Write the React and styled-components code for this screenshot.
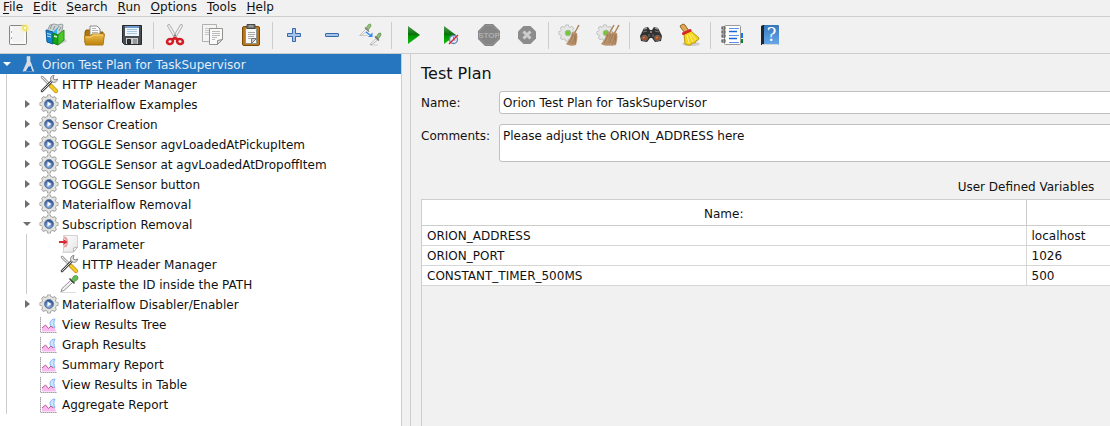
import React from "react";
import styled, { createGlobalStyle } from "styled-components";

const Global = createGlobalStyle`
  * { box-sizing: border-box; }
  body {
    margin: 0;
    background: #f1f1f1;
    color: #111;
    font: 12px/20px "DejaVu Sans", Verdana, sans-serif;
    overflow: hidden;
  }
  button, input, textarea { font: inherit; color: inherit; }
`;

const line = "#cdcdcd";

const Page = styled.div`
  display: flex;
  flex-direction: column;
  height: 100vh;
`;

const MenuBar = styled.nav`
  display: flex;
  flex: none;
  gap: 10px;
  height: 17px;
  padding-left: 3px;
  border-bottom: 1px solid ${line};
`;

const MenuItem = styled.button`
  display: block;
  height: 14px;
  border: 0;
  padding: 0;
  background: none;
  line-height: 13px;
  white-space: nowrap;
`;

const Mnemonic = styled.u`
  text-underline-offset: 2px;
`;

const ToolBar = styled.div`
  display: flex;
  flex: none;
  height: 37px;
  align-items: center;
  border-bottom: 1px solid ${line};
`;

const ToolButton = styled.button`
  display: flex;
  flex: none;
  border: 0;
  padding: 0 8px 0 6px;
  background: none;
`;

const Separator = styled.span`
  flex: none;
  width: 1px;
  height: 27px;
  margin: 0 3px 0 1px;
  background: ${line};
`;

const Main = styled.main`
  display: flex;
  flex: 1;
  min-height: 0;
`;

const TreePane = styled.aside`
  flex: 0 0 402px;
  overflow: hidden;
  background: #fff;
  border-right: 1px solid ${line};
`;

const Branch = styled.ul`
  list-style: none;
  margin: 0 0 0 ${(p) => (p.$root ? 0 : 6)}px;
  padding: 0 0 0 ${(p) => (p.$root ? 0 : 13)}px;
  border-left: ${(p) => (p.$root ? "0" : `1px solid ${line}`)};
`;

const Row = styled.div`
  display: flex;
  align-items: flex-start;
  height: 20px;
  line-height: 22px;
  white-space: nowrap;
  background: ${(p) => (p.$selected ? "#2675bf" : "transparent")};
  color: ${(p) => (p.$selected ? "#e4eef8" : "#111")};
`;

const Toggle = styled.button`
  display: flex;
  align-items: center;
  justify-content: center;
  width: 14px;
  height: 20px;
  margin-right: 5px;
  padding: 0;
  border: 0;
  background: none;
  color: ${(p) => (p.$selected ? "#fff" : "#6e6e6e")};
`;

const ToggleSpace = styled.span`
  width: 14px;
  margin-right: 5px;
`;

const RowIcon = styled.span`
  display: flex;
  width: 20px;
  margin-right: 3px;
`;

const EditorPane = styled.section`
  flex: 1;
  min-width: 0;
  overflow: hidden;
  margin-left: 8px;
  border-left: 1px solid ${line};
`;

const Editor = styled.div`
  display: flex;
  flex-direction: column;
  min-width: 1220px;
  height: 100%;
  padding: 8px 0 0 10px;
`;

const Title = styled.h1`
  margin: 0 0 6px;
  font-size: 16px;
  line-height: 23px;
  font-weight: 400;
`;

const Field = styled.div`
  display: flex;
  margin-bottom: ${(p) => p.$gap}px;
`;

const FieldLabel = styled.label`
  flex: 0 0 78px;
  line-height: 24px;
`;

const fieldBox = `
  flex: 1;
  min-width: 0;
  border: 1px solid #c0c0c0;
  border-radius: 3px;
  background: #fff;
  outline: 0;
`;

const TextInput = styled.input`
  ${fieldBox}
  height: 23px;
  padding: 0 3px;
`;

const TextArea = styled.textarea`
  ${fieldBox}
  height: 38px;
  padding: 1px 3px;
  resize: none;
  overflow: hidden;
`;

const TableFrame = styled.div`
  flex: 1;
  border-left: 1px solid ${line};
`;

const Table = styled.table`
  width: 100%;
  table-layout: fixed;
  border-collapse: separate;
  border-spacing: 0;
  background: #fff;
`;

const Caption = styled.h2`
  margin: 0;
  height: 25px;
  font-size: 12px;
  font-weight: 400;
  line-height: 26px;
  text-align: center;
`;

const HeadCell = styled.th`
  height: 27px;
  padding: 2px 5px 0;
  font-weight: 400;
  border: solid ${line};
  border-width: 1px 1px 1px 0;
`;

const Cell = styled.td`
  height: 20px;
  padding: 2px 5px 0;
  line-height: 17px;
  border: solid #d6d6d6;
  border-width: 0 1px 1px 0;
`;

const Svg = ({ size = 24, box = 24, children }) => (
  <svg width={size} height={size} viewBox={`0 0 ${box} ${box}`} fill="none" aria-hidden="true">
    {children}
  </svg>
);

const GradientSheet = styled.svg`
  position: absolute;
`;

const Gradients = () => (
  <GradientSheet width="0" height="0" aria-hidden="true">
    <defs>
      <linearGradient id="play" x1="0" y1="0" x2="0" y2="1">
        <stop offset="0" stopColor="#4f9a50" /><stop offset=".48" stopColor="#087008" />
        <stop offset=".5" stopColor="#008e00" /><stop offset="1" stopColor="#10bd10" />
      </linearGradient>
      <linearGradient id="gold" x1="0" y1="0" x2="0" y2="1">
        <stop offset="0" stopColor="#edbd4e" /><stop offset="1" stopColor="#bd820c" />
      </linearGradient>
      <linearGradient id="book" x1="0" y1="0" x2="0" y2="1">
        <stop offset="0" stopColor="#3778bd" /><stop offset="1" stopColor="#68a8ed" />
      </linearGradient>
      <linearGradient id="sheet" x1="0" y1="0" x2="1" y2="1">
        <stop offset="0" stopColor="#fff" /><stop offset="1" stopColor="#e4e4e4" />
      </linearGradient>
      <radialGradient id="hub" cx=".45" cy=".7" r=".6">
        <stop offset="0" stopColor="#9fc3ee" /><stop offset="1" stopColor="#2b5191" />
      </radialGradient>
    </defs>
  </GradientSheet>
);

const NewIcon = () => (
  <Svg>
    <rect x="3.5" y="2.5" width="17" height="19" rx="1" fill="#f3f3f3" stroke="#858781" />
    <path d="M5.5 4v16M19 9v11H6" stroke="#fff" />
    <path d="M5.5 8v2M5.5 14v2" stroke="#aaa" />
    <circle cx="19" cy="5" r="4.5" fill="#fbf08a" opacity=".55" />
    <circle cx="19" cy="5" r="2" fill="#fffbd0" stroke="#f0e268" strokeWidth="1.5" />
  </Svg>
);

const TemplatesIcon = () => (
  <Svg>
    <path d="M18 14l5 4-8 4" fill="#aaa" opacity=".6" />
    <path d="M4 6l2-4 4-1 4 1 4-1 1 1-1 6-5 4H3z" fill="#cfd5d6" stroke="#97a0a1" />
    <path d="M6 6l2-4M9 7l2-4M12 8l3-5M15 8l2-4" stroke="#87908f" />
    <path d="M2 7l7 2v12l-6-2z" fill="#1683ce" stroke="#0c5b96" />
    <path d="M9 9l4-4v8l-4 7z" fill="#3bb5ee" />
    <path d="M3 10.500l4 1M3 13l4 1" stroke="#bfe5fa" />
    <path d="M9 10l5 2v10l-5-2z" fill="#18a51a" stroke="#087a12" />
    <path d="M14 12l6-5v10l-6 5z" fill="#4cc628" stroke="#22951a" />
    <path d="M10 13l3 1" stroke="#d5f7c5" strokeWidth="1.500" />
  </Svg>
);

const OpenIcon = () => (
  <Svg>
    <path d="M3 20V9l1-2h5l1 2h11v11z" fill="#a8740b" stroke="#8b610e" />
    <path d="M8 13V3h7l3 3v8z" fill="#fafafa" stroke="#8c8c8c" />
    <path d="M10 5.500h4M10 7.500h6M10 9.500h6" stroke="#b5b5b5" />
    <path d="M2.500 13h6l1.500-2h12.500l-1.500 11H3.500z" fill="url(#gold)" stroke="#b37a0c" />
    <path d="M3.500 14h6l1.500-2h10" stroke="#f8d578" />
  </Svg>
);

const SaveIcon = () => (
  <Svg>
    <path d="M2.500 2.500h19v19h-17l-2-2z" fill="#494c50" stroke="#26292d" />
    <path d="M5 3h14v10H5z" fill="#eef5fb" />
    <path d="M5 3h14v2H5z" fill="#6c9bce" />
    <path d="M7 6.500h10M7 8.500h10M7 10.500h10" stroke="#a8c4df" />
    <path d="M6 15h12v6H6z" fill="#c9ccce" />
    <path d="M7.500 16.500h3v4h-3z" fill="#33373b" stroke="#222" />
    <path d="M13 16h4v5h-4z" fill="#97999b" />
  </Svg>
);

const CutIcon = () => (
  <Svg>
    <path d="M5 1.500l1.500 0 7 12-2 1.500-7-12zM19 1.500h-1.500l-7 12 2 1.500 7-12z" fill="#eeeeec" stroke="#a0a29e" strokeWidth=".8" strokeLinejoin="round" />
    <circle cx="12" cy="12.500" r="1" fill="#777" />
    <ellipse cx="7" cy="18.500" rx="3" ry="2.500" transform="rotate(-20 7 18.500)" stroke="#d51b24" strokeWidth="2.600" />
    <ellipse cx="17" cy="18.500" rx="3" ry="2.500" transform="rotate(20 17 18.500)" stroke="#d51b24" strokeWidth="2.600" />
    <path d="M9 16.500l3-1.500 3 1.500" stroke="#d51b24" strokeWidth="2.600" />
  </Svg>
);

const CopyIcon = () => (
  <Svg>
    <path d="M1.500 1.500h14v17h-14z" fill="#f4f4f4" stroke="#b0b2ae" />
    <path d="M4 5.500h9M4 7.500h9M4 9.500h6M4 11.500h4" stroke="#c8c8c8" />
    <path d="M8.500 5.500h13v11l-5 5h-8z" fill="#fafafa" stroke="#92948f" />
    <path d="M11 8.500h8M11 10.500h8M11 12.500h8M11 14.500h5M11 16.500h3" stroke="#b9b9b9" />
    <path d="M21.500 16.500l-5 5v-4z" fill="#ddd" stroke="#8c8e89" />
  </Svg>
);

const PasteIcon = () => (
  <Svg>
    <rect x="3.500" y="3.500" width="17" height="19" rx="1.500" fill="#b77719" stroke="#7e4c07" />
    <path d="M6.500 5.500h11v15h-11z" fill="#f8f8f7" stroke="#94958f" />
    <path d="M8 1.500h8v4H8z" fill="#777a77" stroke="#464846" />
    <path d="M10 3h4" stroke="#bbb" />
    <path d="M9 9.500h7M9 11.500h7M9 13.500h6M9 15.500h3" stroke="#a8a8a8" />
    <path d="M17.500 15.500l-5 5v-5z" fill="#ccc" stroke="#777" />
  </Svg>
);

const PlusIcon = () => (
  <Svg>
    <path d="M10.500 5.500h3v5h5v3h-5v5h-3v-5h-5v-3h5z" fill="#a7c4e8" stroke="#3768aa" strokeLinejoin="round" />
  </Svg>
);

const MinusIcon = () => (
  <Svg><rect x="5.500" y="10.500" width="13" height="3" rx=".5" fill="#a7c4e8" stroke="#3768aa" /></Svg>
);

const ToggleIcon = () => (
  <Svg>
    <path d="M1 12.500h9M12 22h8" stroke="#d0d0d0" />
    <path d="M2 12l6-6 1.500 1.500L4 12z" fill="#fafafa" stroke="#b9b9b9" strokeWidth=".8" />
    <path d="M7 4.500l4 4" stroke="#77806f" strokeWidth="1.500" />
    <path d="M8.500 4.500l2-3 2-.5.500 2-2.500 3.500z" fill="#93bf7b" stroke="#6e9a58" strokeWidth=".8" />
    <path d="M12 21.500l6-6 1.500 1.500-5.500 4.500z" fill="#fafafa" stroke="#a5a5a5" strokeWidth=".8" />
    <path d="M17 13.500l4 4" stroke="#66705f" strokeWidth="1.500" />
    <path d="M18.500 13.500l2-3 2-.5.500 2-2.500 3.500z" fill="#93bf7b" stroke="#5c8647" strokeWidth=".8" />
    <path d="M8 9l4 3" stroke="#3388ef" strokeWidth="1.500" />
    <path d="M10 14h4.500V9.500z" fill="#3388ef" />
  </Svg>
);

const PlayIcon = () => (
  <Svg><path d="M7 3v18l12-9z" fill="url(#play)" /></Svg>
);

const PlayNoTimerIcon = () => (
  <Svg>
    <path d="M5 3v18l12-9z" fill="url(#play)" />
    <circle cx="14.500" cy="16.500" r="4" fill="#e9edf8" stroke="#5f84bd" strokeWidth="1.300" />
    <path d="M14.500 14v3h2" stroke="#88a" />
    <path d="M10 21l9-9" stroke="#d22b35" strokeWidth="1.500" />
  </Svg>
);

const StopText = styled.text`
  font: bold 8px "Liberation Sans", sans-serif;
  fill: #adadad;
`;

const StopIcon = () => (
  <Svg>
    <path d="M8 1h8l7 7v8l-7 7H8l-7-7V8z" fill="#858585" />
    <path d="M8.500 2.500h7l6 6v7l-6 6h-7l-6-6v-7z" stroke="#929292" />
    <StopText x="12" y="15" textAnchor="middle">STOP</StopText>
  </Svg>
);

const ShutdownIcon = () => (
  <Svg>
    <path d="M8.500 3h7l5.500 5.500v7L15.500 21h-7L3 15.500v-7z" fill="#8c8c8c" />
    <path d="M8.500 8.500l7 7M15.500 8.500l-7 7" stroke="#ccc" strokeWidth="3" />
  </Svg>
);

const Broom = ({ x }) => (
  <g transform={`translate(${x} 0)`}>
    <path d="M17 11l5-9" stroke="#a9835a" strokeWidth="1.500" />
    <path d="M15 9l5 1c1 4 0 8-1 12-3 1-7 1-10-1 3-3 5-7 6-12z" fill="#b8926b" />
    <path d="M16 11c-1 4-2 6-4 9M18 11c0 4-1 7-3 10M19 12l-1 9" stroke="#98744f" strokeWidth=".8" />
  </g>
);

const Cog = ({ cx, cy, r, fill, stroke }) => (
  <g>
    {[stroke, fill].map((color, pass) => (
      <g key={color} fill={color}>
        {[0, 45, 90, 135].map((angle) => (
          <rect
            key={angle}
            x={cx - 2 + pass * 0.6}
            y={cy - r + pass * 0.7}
            width={4 - pass * 1.2}
            height={2 * r - pass * 1.4}
            rx="1"
            transform={`rotate(${angle} ${cx} ${cy})`}
          />
        ))}
        <circle cx={cx} cy={cy} r={r - 1.6 - pass * 0.7} />
      </g>
    ))}
  </g>
);

const PaleGear = () => (
  <g>
    <Cog cx={9} cy={10} r={8.5} fill="#e6e6e5" stroke="#b8b9b8" />
    <circle cx="10" cy="10" r="2.800" fill="#71c934" stroke="#a3b59d" />
  </g>
);

const ClearIcon = () => (<Svg><PaleGear /><Broom x={-1} /></Svg>);
const ClearAllIcon = () => (<Svg><PaleGear /><Broom x={-4} /><Broom x={1} /></Svg>);

const BinocularsIcon = () => (
  <Svg>
    <path d="M5 5l4-1 2 3h2l2-3 4 1 4 8-1 5-6 1-3-4h-2l-3 4-6-1-1-5z" fill="#303030" />
    <path d="M5 6l3-1M16 5l3 1M11 9h2" stroke="#999" strokeWidth="1.500" />
    <path d="M4 9l4-1M16 8l4 1M10 11v3M14 11v3" stroke="#777" />
    <ellipse cx="5.500" cy="15" rx="3" ry="2.800" fill="#9c5128" stroke="#666" />
    <ellipse cx="18.500" cy="15" rx="3" ry="2.800" fill="#9c5128" stroke="#666" />
    <path d="M4 15l2-1M17 15l2-1" stroke="#d5915e" />
  </Svg>
);

const SearchResetIcon = () => (
  <Svg>
    <ellipse cx="14" cy="21" rx="9" ry="2" fill="#aaa" opacity=".5" />
    <path d="M3 3l3-2 2 1 4 6-4 2-4-5z" fill="#dda957" stroke="#986323" strokeLinejoin="round" />
    <path d="M7 11l7-3 8 7-1 2-2 1-1 2-3 0-1 2-3 0-3-1z" fill="#f3d51c" stroke="#b99911" strokeLinejoin="round" />
    <path d="M10 12l2 8M12 11l4 8M14 11l5 6" stroke="#fff08a" />
    <path d="M6.500 10.500l6.500-3" stroke="#d62427" strokeWidth="3" strokeLinecap="round" />
  </Svg>
);

const FunctionIcon = () => (
  <Svg>
    <path d="M19 10h4v5h-4z" fill="#1674ed" /><path d="M19 16h4v4h-4z" fill="#128127" />
    <rect x="4.500" y="2.500" width="16" height="19" rx="1" fill="#fff" stroke="#999" />
    <g fill="#eee" stroke="#444">
      <rect x="2" y="4" width="3" height="2" /><rect x="2" y="8" width="3" height="2" />
      <rect x="2" y="12" width="3" height="2" /><rect x="2" y="17" width="3" height="2" />
    </g>
    <path d="M9 5.500h10M9 12.500h10M9 19.500h10" stroke="#5b93e6" />
    <path d="M9 8.500h8M9 15.500h8" stroke="#1669dc" strokeWidth="1.500" />
  </Svg>
);

const HelpGlyph = styled.text`
  font: 18px "DejaVu Serif", serif;
  fill: #fff;
`;

const HelpIcon = () => (
  <Svg>
    <path d="M3 3l2-1h15v20H3z" fill="#1d2530" />
    <rect x="6" y="2" width="15" height="20" rx="1" fill="url(#book)" />
    <path d="M4 21.500h16" stroke="#d6d6d6" />
    <HelpGlyph x="13.500" y="18" textAnchor="middle">?</HelpGlyph>
  </Svg>
);

const PlanIcon = () => (
  <Svg size={20} box={20}>
    <path d="M8 2.500h3V8l4 9.500H4L8 8z" fill="#5a97d2" stroke="#a9c1d8" strokeWidth=".8" />
    <path d="M6.500 12h6l2 5.500h-10z" fill="#1764b8" />
    <path d="M8 2.500h3V8l1 3-2 2-2.500 4H4L8 8z" fill="#d5dde4" />
    <path d="M8 15l2-3 1 5H7z" fill="#1764b8" />
    <path d="M11 8l3 9" stroke="#d5dde4" strokeWidth="1.500" />
  </Svg>
);

const ToolsIcon = () => (
  <Svg size={20} box={20}>
    <path d="M3 3l9 9" stroke="#777" strokeWidth="2.500" strokeLinecap="round" />
    <path d="M3 3l9 9" stroke="#ececec" strokeWidth="1.300" strokeLinecap="round" />
    <path d="M12 12l5 5" stroke="#c09010" strokeWidth="4.200" strokeLinecap="round" />
    <path d="M12 12l5 5" stroke="#f2c925" strokeWidth="2.800" strokeLinecap="round" />
    <path d="M3 17L14 6" stroke="#4c4c4c" strokeWidth="2.600" strokeLinecap="round" />
    <path d="M3 17L14 6" stroke="#d5d5d5" strokeWidth="1" />
    <path d="M15 1.500c-3 0-4 3-3 5l1.500 1.500c2.500 1 5-.5 5-3l-2.500 1-2-1.500z" fill="#e6e6e6" stroke="#666" strokeWidth=".8" />
  </Svg>
);

const GearIcon = () => (
  <Svg size={20} box={20}>
    <Cog cx={10} cy={10} r={9.5} fill="#e3e3e1" stroke="#999a98" />
    <circle cx="10" cy="10" r="4.500" fill="url(#hub)" stroke="#6a7d9e" />
    <path d="M8.500 7.500v5l4-2.500z" fill="#f3f7fc" />
  </Svg>
);

const ParameterIcon = () => (
  <Svg size={20} box={20}>
    <path d="M3 18.500h11" stroke="#ddd" />
    <path d="M4.500 1.500h14v12l-4 4.500h-10z" fill="url(#sheet)" stroke="#d3d3d3" />
    <path d="M18.500 13l-4 5v-4z" fill="#fff" stroke="#aaa" strokeWidth=".8" />
    <path d="M5 3.500c4 0 4 9 0 9" stroke="#e7a0a0" strokeWidth="2" />
    <path d="M0 8h5" stroke="#d42b30" strokeWidth="2" />
    <path d="M4.500 5l4 3-4 3z" fill="#d42b30" />
  </Svg>
);

const SamplerIcon = () => (
  <Svg size={20} box={20}>
    <path d="M1 18.500h16" stroke="#ddd" />
    <path d="M2 17.500l1-3 8.500-8 2 2-8.500 8z" fill="#f2f2f2" stroke="#777" strokeWidth=".8" />
    <path d="M10.500 4.500l5 5" stroke="#444" strokeWidth="1.500" />
    <path d="M12.500 5.500l2.500-3.500 2.500-.5 1.500 1.500-.5 2.500L15 8z" fill="#69bd55" stroke="#438d40" strokeWidth=".8" />
  </Svg>
);

const ListenerIcon = () => (
  <Svg size={20} box={20}>
    <path d="M3 17.500V14l3.500-3 3 3.500L12 12l4 2 1 3.500z" fill="#f8baf0" />
    <path d="M16 5c-3 0-5 2-5 4.500s2 4 5 4c-1.500-3-1.500-5.500 0-8.500z" fill="#cfe4fd" stroke="#86b6ee" />
    <path d="M3 14l3.500-3 3 3.500L12 12l2 2" stroke="#bd5a8c" />
    <path d="M1.500 3v15.500H18" stroke="#c9c9c9" />
    <path d="M1.500 3v15.500H18" stroke="#a5a5a5" strokeDasharray="1 1" />
  </Svg>
);

const toolGroups = [
  [["New", NewIcon], ["Templates", TemplatesIcon], ["Open", OpenIcon], ["Save", SaveIcon]],
  [["Cut", CutIcon], ["Copy", CopyIcon], ["Paste", PasteIcon]],
  [["Expand All", PlusIcon], ["Collapse All", MinusIcon], ["Toggle", ToggleIcon]],
  [["Start", PlayIcon], ["Start no pauses", PlayNoTimerIcon], ["Stop", StopIcon], ["Shutdown", ShutdownIcon]],
  [["Clear", ClearIcon], ["Clear All", ClearAllIcon]],
  [["Search", BinocularsIcon], ["Reset Search", SearchResetIcon]],
  [["Function Helper", FunctionIcon], ["Help", HelpIcon]],
];

const plan = {
  name: "Orion Test Plan for TaskSupervisor",
  icon: PlanIcon,
  selected: true,
  state: "open",
  children: [
    { name: "HTTP Header Manager", icon: ToolsIcon },
    { name: "Materialflow Examples", icon: GearIcon, state: "closed" },
    { name: "Sensor Creation", icon: GearIcon, state: "closed" },
    { name: "TOGGLE Sensor agvLoadedAtPickupItem", icon: GearIcon, state: "closed" },
    { name: "TOGGLE Sensor at agvLoadedAtDropoffItem", icon: GearIcon, state: "closed" },
    { name: "TOGGLE Sensor button", icon: GearIcon, state: "closed" },
    { name: "Materialflow Removal", icon: GearIcon, state: "closed" },
    {
      name: "Subscription Removal",
      icon: GearIcon,
      state: "open",
      children: [
        { name: "Parameter", icon: ParameterIcon },
        { name: "HTTP Header Manager", icon: ToolsIcon },
        { name: "paste the ID inside the PATH", icon: SamplerIcon },
      ],
    },
    { name: "Materialflow Disabler/Enabler", icon: GearIcon, state: "closed" },
    { name: "View Results Tree", icon: ListenerIcon },
    { name: "Graph Results", icon: ListenerIcon },
    { name: "Summary Report", icon: ListenerIcon },
    { name: "View Results in Table", icon: ListenerIcon },
    { name: "Aggregate Report", icon: ListenerIcon },
  ],
};

const TreeNode = ({ node }) => {
  const Icon = node.icon;
  return (
    <li>
      <Row $selected={node.selected}>
        {node.state ? (
          <Toggle $selected={node.selected} aria-label={node.name} aria-expanded={node.state === "open"}>
            <Svg size={10} box={10}>
              <path d={node.state === "open" ? "M1 3h8L5 7z" : "M3 1v8l5-4z"} fill="currentColor" />
            </Svg>
          </Toggle>
        ) : (
          <ToggleSpace />
        )}
        <RowIcon><Icon /></RowIcon>
        {node.name}
      </Row>
      {node.children && (
        <Branch>
          {node.children.map((child) => <TreeNode key={child.name} node={child} />)}
        </Branch>
      )}
    </li>
  );
};

const variables = [
  ["ORION_ADDRESS", "localhost"],
  ["ORION_PORT", "1026"],
  ["CONSTANT_TIMER_500MS", "500"],
];

export default function App() {
  return (
    <Page>
      <Global />
      <Gradients />
      <MenuBar>
        {["File", "Edit", "Search", "Run", "Options", "Tools", "Help"].map((name) => (
          <MenuItem key={name}><Mnemonic>{name[0]}</Mnemonic>{name.slice(1)}</MenuItem>
        ))}
      </MenuBar>
      <ToolBar role="toolbar">
        {toolGroups.map((group, i) => (
          <React.Fragment key={i}>
            {i > 0 && <Separator />}
            {group.map(([name, Icon]) => (
              <ToolButton key={name} aria-label={name}><Icon /></ToolButton>
            ))}
          </React.Fragment>
        ))}
      </ToolBar>
      <Main>
        <TreePane>
          <Branch $root><TreeNode node={plan} /></Branch>
        </TreePane>
        <EditorPane>
          <Editor>
            <Title>Test Plan</Title>
            <Field $gap={9}>
              <FieldLabel htmlFor="name">Name:</FieldLabel>
              <TextInput id="name" defaultValue="Orion Test Plan for TaskSupervisor" />
            </Field>
            <Field $gap={12}>
              <FieldLabel htmlFor="comments">Comments:</FieldLabel>
              <TextArea id="comments" defaultValue="Please adjust the ORION_ADDRESS here" />
            </Field>
            <Caption id="variables">User Defined Variables</Caption>
            <TableFrame>
              <Table aria-labelledby="variables">
                <thead>
                  <tr><HeadCell>Name:</HeadCell><HeadCell /></tr>
                </thead>
                <tbody>
                  {variables.map(([name, value]) => (
                    <tr key={name}><Cell>{name}</Cell><Cell>{value}</Cell></tr>
                  ))}
                </tbody>
              </Table>
            </TableFrame>
          </Editor>
        </EditorPane>
      </Main>
    </Page>
  );
}
